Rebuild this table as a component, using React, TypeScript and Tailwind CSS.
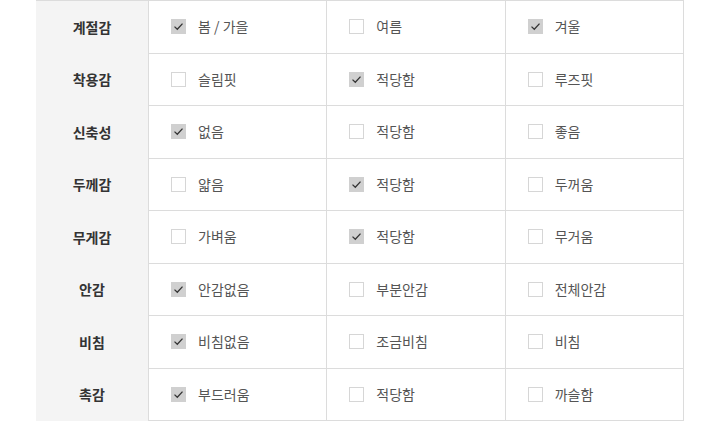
const rows: { label: string; options: string[]; checked: number }[] = [
  { label: "계절감", options: ["봄 / 가을", "여름", "겨울"], checked: -1 },
  { label: "착용감", options: ["슬림핏", "적당함", "루즈핏"], checked: 1 },
  { label: "신축성", options: ["없음", "적당함", "좋음"], checked: 0 },
  { label: "두께감", options: ["얇음", "적당함", "두꺼움"], checked: 1 },
  { label: "무게감", options: ["가벼움", "적당함", "무거움"], checked: 1 },
  { label: "안감", options: ["안감없음", "부분안감", "전체안감"], checked: 0 },
  { label: "비침", options: ["비침없음", "조금비침", "비침"], checked: 0 },
  { label: "촉감", options: ["부드러움", "적당함", "까슬함"], checked: 0 },
];

function Box({ on }: { on: boolean }) {
  return on ? (
    <span className="flex h-[15px] w-[15px] items-center justify-center bg-[#d0d0d0]">
      <svg width="11" height="11" viewBox="0 0 11 11" fill="none">
        <path d="M1.5 5.6 L4.3 8.3 L9.5 2.6" stroke="#333" strokeWidth="1.3" />
      </svg>
    </span>
  ) : (
    <span className="h-[15px] w-[15px] border border-[#d6d6d6] bg-white" />
  );
}

export default function App() {
  return (
    <div className="h-[421px] w-[720px] bg-white font-['Noto_Sans_CJK_KR',sans-serif]">
      <div className="ml-[36px] w-[648px] border-t border-[#dcdcdc]">
        {rows.map((r, i) => (
          <div key={i} className="flex h-[52.5px]">
            <div className="flex w-[112px] items-center justify-center bg-[#f4f4f4] text-[14px] font-bold text-[#333]">
              {r.label}
            </div>
            {r.options.map((o, j) => {
              const on = r.checked === j || (i === 0 && j !== 1);
              return (
                <div
                  key={j}
                  className={`flex flex-1 items-center gap-[12px] border-b border-l border-[#dcdcdc] pl-[22px] text-[14px] text-[#555] ${j === 2 ? "border-r" : ""}`}
                >
                  <Box on={on} />
                  <span>{o}</span>
                </div>
              );
            })}
          </div>
        ))}
      </div>
    </div>
  );
}
